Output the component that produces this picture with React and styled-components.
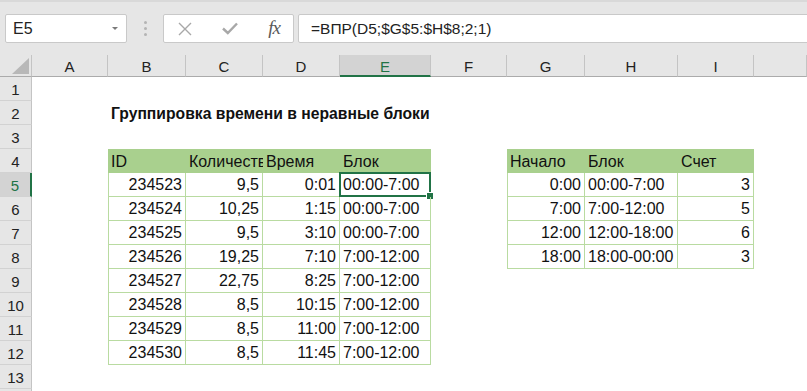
import React from 'react';
import styled, { createGlobalStyle } from 'styled-components';

const GlobalStyle = createGlobalStyle`
  html, body { margin: 0; padding: 0; background: #ffffff; }
  body { font-family: "Liberation Sans", Arial, sans-serif; color: #000; }
  * { box-sizing: border-box; }
`;

const GREEN = '#217346';
const HEAD_GREEN = '#a9d08e';
const LINE_GREEN = '#b9dba1';

const Page = styled.div`
  width: 807px;
  height: 391px;
  overflow: hidden;
  display: flex;
  flex-direction: column;
  background: #fff;
`;

const FormulaBar = styled.div`
  height: 55px;
  flex: none;
  display: flex;
  align-items: center;
  padding: 0 0 0 5px;
  background: #e6e6e6;
  border-top: 2px solid #d9d9d9;
  overflow: hidden;
`;

const NameBox = styled.div`
  width: 122px;
  height: 29px;
  background: #fff;
  border: 1px solid #c9c9c9;
  border-radius: 2px;
  display: flex;
  align-items: center;
  justify-content: space-between;
  padding: 0 8px 0 7px;
  font-size: 16px;
  color: #222;
`;

const Caret = styled.span`
  width: 0;
  height: 0;
  border-left: 3px solid transparent;
  border-right: 3px solid transparent;
  border-top: 3px solid #7a7a7a;
`;

const Grip = styled.div`
  width: 36px;
  display: flex;
  flex-direction: column;
  align-items: center;
  gap: 3px;
  & span {
    width: 3px;
    height: 3px;
    border-radius: 50%;
    background: #b4b4b4;
  }
`;

const FxGroup = styled.div`
  width: 131px;
  height: 29px;
  background: #fff;
  border: 1px solid #c9c9c9;
  border-radius: 2px;
  display: flex;
  align-items: center;
  justify-content: space-between;
  padding: 0 13px 0 14px;
`;

const FxLabel = styled.span`
  font-family: "Liberation Serif", "Times New Roman", serif;
  font-style: italic;
  font-size: 19px;
  color: #5a5a5a;
  letter-spacing: -1px;
  margin-top: -2px;
`;

const FormulaInput = styled.div`
  flex: 1;
  height: 29px;
  margin-left: 4px;
  margin-right: -4px;
  background: #fff;
  border: 1px solid #c9c9c9;
  border-radius: 2px;
  display: flex;
  align-items: center;
  padding-left: 12px;
  font-size: 15.5px;
  color: #222;
`;

const Sheet = styled.div`
  flex: 1;
  display: grid;
  grid-template-columns: 32px 76px 78px 77px 77px 91px 76px 78px 93px 76px 1fr;
  grid-template-rows: 22px repeat(14, 24px);
  background: #fff;
`;

const Corner = styled.div`
  background: #e6e6e6;
  border-right: 1px solid #c4c4c4;
  border-bottom: 1px solid #ababab;
  display: flex;
  align-items: flex-end;
  justify-content: flex-end;
  padding: 0 2px 2px 0;
`;

const ColHead = styled.div`
  background: ${p => (p.$active ? '#d3d3d3' : '#e6e6e6')};
  color: ${p => (p.$active ? GREEN : '#222')};
  border-right: 1px solid #c4c4c4;
  border-bottom: ${p => (p.$active ? `2px solid ${GREEN}` : '1px solid #ababab')};
  display: flex;
  align-items: center;
  justify-content: center;
  font-size: 15px;
  padding-top: 2px;
`;

const RowHead = styled.div`
  background: ${p => (p.$active ? '#d3d3d3' : '#e6e6e6')};
  color: ${p => (p.$active ? GREEN : '#222')};
  border-right: ${p => (p.$active ? `2px solid ${GREEN}` : '1px solid #c4c4c4')};
  border-bottom: 1px solid #d2d2d2;
  display: flex;
  align-items: center;
  justify-content: center;
  font-size: 15px;
  padding-top: 1px;
`;

const Cell = styled.div`
  position: relative;
  display: flex;
  align-items: flex-end;
  justify-content: ${p => (p.$align === 'right' ? 'flex-end' : 'flex-start')};
  padding: 0 3px 1px 3px;
  font-size: ${p => (p.$bold ? '15.7px' : '16px')};
  line-height: 20px;
  white-space: nowrap;
  overflow: ${p => (p.$spill ? 'visible' : 'hidden')};
  font-weight: ${p => (p.$bold ? 700 : 400)};
  background: ${p => (p.$head ? HEAD_GREEN : 'transparent')};
  border-right: ${p => (p.$body ? `1px solid ${LINE_GREEN}` : 'none')};
  border-bottom: ${p => (p.$body ? `1px solid ${LINE_GREEN}` : 'none')};
  border-left: ${p => (p.$first ? `1px solid ${LINE_GREEN}` : 'none')};
  color: #111;
`;

const Selection = styled.div`
  position: absolute;
  left: -1px;
  top: -1px;
  right: -1px;
  bottom: -1px;
  border: 2px solid ${GREEN};
  pointer-events: none;
  &::after {
    content: '';
    position: absolute;
    right: -5px;
    bottom: -5px;
    width: 6px;
    height: 6px;
    background: ${GREEN};
    border: 1px solid #fff;
  }
`;

const COLS = ['A', 'B', 'C', 'D', 'E', 'F', 'G', 'H', 'I', ''];

const t1 = [
  ['234523', '9,5', '0:01', '00:00-7:00'],
  ['234524', '10,25', '1:15', '00:00-7:00'],
  ['234525', '9,5', '3:10', '00:00-7:00'],
  ['234526', '19,25', '7:10', '7:00-12:00'],
  ['234527', '22,75', '8:25', '7:00-12:00'],
  ['234528', '8,5', '10:15', '7:00-12:00'],
  ['234529', '8,5', '11:00', '7:00-12:00'],
  ['234530', '8,5', '11:45', '7:00-12:00'],
];
const t1Align = ['right', 'right', 'right', 'left'];

const t2 = [
  ['0:00', '00:00-7:00', '3'],
  ['7:00', '7:00-12:00', '5'],
  ['12:00', '12:00-18:00', '6'],
  ['18:00', '18:00-00:00', '3'],
];
const t2Align = ['right', 'left', 'right'];

function cellFor(row, col) {
  if (row === 2 && col === 1) return { text: 'Группировка времени в неравные блоки', bold: true, spill: true };
  if (row === 4) {
    const h1 = ['ID', 'Количество', 'Время', 'Блок'];
    const h2 = ['Начало', 'Блок', 'Счет'];
    if (col >= 1 && col <= 4) return { text: h1[col - 1], head: true };
    if (col >= 6 && col <= 8) return { text: h2[col - 6], head: true };
  }
  if (row >= 5 && row <= 12 && col >= 1 && col <= 4) {
    return {
      text: t1[row - 5][col - 1],
      align: t1Align[col - 1],
      body: true,
      first: col === 1,
      selected: row === 5 && col === 4,
      spill: row === 5 && col === 4,
    };
  }
  if (row >= 5 && row <= 8 && col >= 6 && col <= 8) {
    return { text: t2[row - 5][col - 6], align: t2Align[col - 6], body: true, first: col === 6 };
  }
  return null;
}

const CrossIcon = () => (
  <svg width="14" height="14" viewBox="0 0 14 14">
    <path d="M1 1 L13 13 M13 1 L1 13" stroke="#a8a8a8" strokeWidth="1.4" fill="none" />
  </svg>
);

const CheckIcon = () => (
  <svg width="16" height="13" viewBox="0 0 16 13">
    <path d="M1 6.5 L5.8 11 L15 1.5" stroke="#a8a8a8" strokeWidth="2.4" fill="none" />
  </svg>
);

const CornerTriangle = () => (
  <svg width="17" height="16" viewBox="0 0 17 16">
    <polygon points="17,0 17,16 0,16" fill="#b8b8b8" />
  </svg>
);

export default function App() {
  const rows = [];
  for (let r = 1; r <= 14; r++) {
    rows.push(
      <RowHead key={`rh${r}`} $active={r === 5}>{r}</RowHead>
    );
    for (let c = 0; c < 10; c++) {
      const d = cellFor(r, c);
      rows.push(
        <Cell
          key={`c${r}-${c}`}
          $align={d?.align}
          $bold={d?.bold}
          $spill={d?.spill}
          $head={d?.head}
          $body={d?.body}
          $first={d?.first}
        >
          {d?.text}
          {d?.selected && <Selection />}
        </Cell>
      );
    }
  }

  return (
    <Page>
      <GlobalStyle />
      <FormulaBar>
        <NameBox>
          <span>E5</span>
          <Caret />
        </NameBox>
        <Grip>
          <span />
          <span />
          <span />
        </Grip>
        <FxGroup>
          <CrossIcon />
          <CheckIcon />
          <FxLabel>fx</FxLabel>
        </FxGroup>
        <FormulaInput>=ВПР(D5;$G$5:$H$8;2;1)</FormulaInput>
      </FormulaBar>
      <Sheet>
        <Corner>
          <CornerTriangle />
        </Corner>
        {COLS.map((c, i) => (
          <ColHead key={`h${i}`} $active={c === 'E'}>{c}</ColHead>
        ))}
        {rows}
      </Sheet>
    </Page>
  );
}
